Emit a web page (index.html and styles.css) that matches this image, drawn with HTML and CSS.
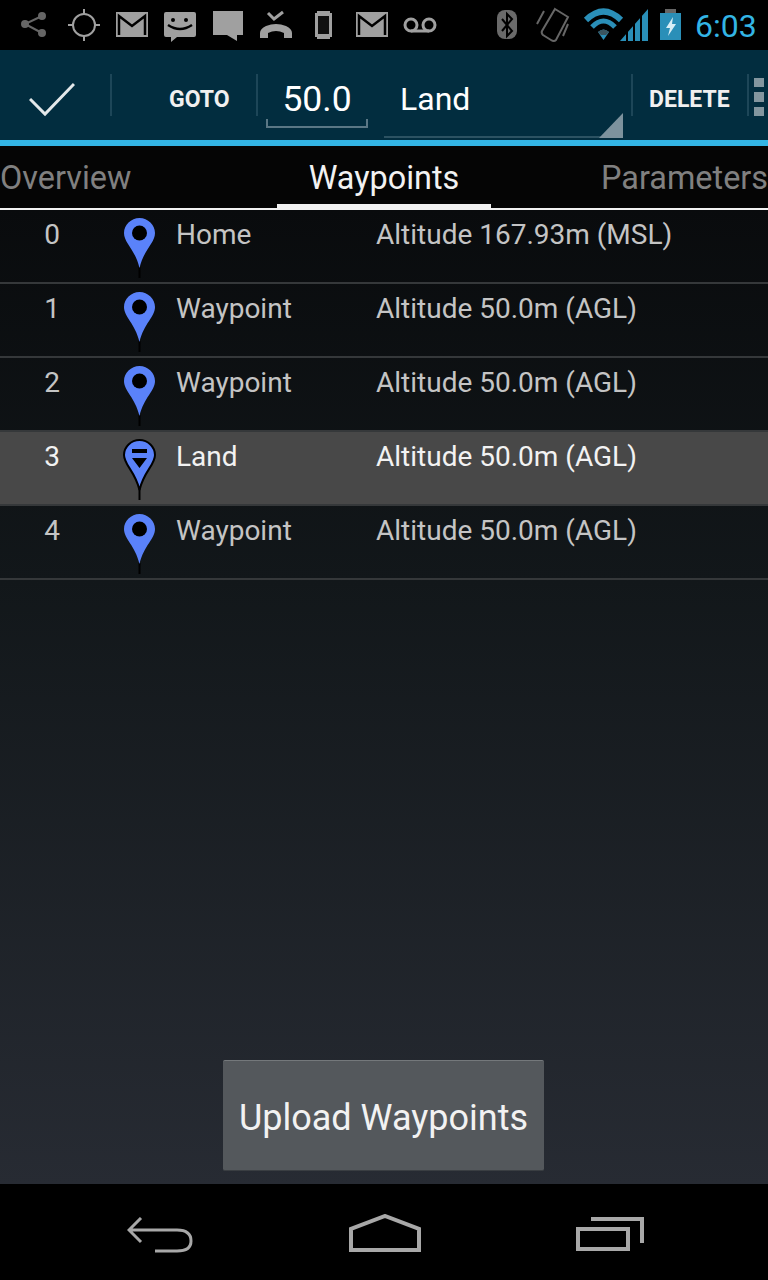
FILE: index.html
```html
<!DOCTYPE html>
<html>
	<head>
		<meta charset="utf-8" />
		<title>Waypoints</title>
		<link rel="stylesheet" href="styles.css">
	</head>

	<body>
		<div class="screen">
			<div class="status">
				<svg class="cell" viewBox="0 0 48 50"><g fill="#666" stroke="#666" stroke-width="2"><path d="M30 16 13 24 30 33" fill="none"/><circle cx="13" cy="24" r="3"/><circle cx="30" cy="16" r="3"/><circle cx="30" cy="33" r="3"/></g></svg>
				<svg class="cell" viewBox="0 0 48 50"><g fill="none" stroke="#a0a0a0" stroke-width="2"><circle cx="24" cy="25" r="11"/><path d="M24 9v5M24 36v5M8 25h5M35 25h5"/></g></svg>
				<svg class="cell" viewBox="0 0 48 50"><rect x="8" y="12" width="32" height="25" fill="#a0a0a0"/><path d="M11 35V16L24 26 37 16V35" fill="none" stroke="#000" stroke-width="2.500"/></svg>
				<svg class="cell" viewBox="0 0 48 50"><path d="M10 12H38Q40 12 40 14V35Q40 37 38 37H21L15 42V37H10Q8 37 8 35V14Q8 12 10 12Z" fill="#a0a0a0"/><circle cx="17" cy="20" r="2"/><circle cx="30" cy="20" r="2"/><path d="M12 25Q24 33 36 25" fill="none" stroke="#000" stroke-width="2.500"/></svg>
				<svg class="cell" viewBox="0 0 48 50"><path d="M9 11H39V35H33V41L23 35H9Z" fill="#a0a0a0"/></svg>
				<svg class="cell" viewBox="0 0 48 50"><path d="M16 13 22 19 31 12" fill="none" stroke="#a0a0a0" stroke-width="3"/><path d="M8 38V33Q8 29 14 26 24 22 34 26 40 29 40 33V38H32V33Q24 29 16 33V38Z" fill="#a0a0a0"/></svg>
				<svg class="cell" viewBox="0 0 48 50"><path d="M17 11H30V13H32V37H30V39H17V37H15V13H17Z" fill="#a0a0a0"/><rect x="18" y="16" width="11" height="18" fill="#111"/></svg>
				<svg class="cell" viewBox="0 0 48 50"><rect x="8" y="12" width="32" height="25" fill="#a0a0a0"/><path d="M11 35V16L24 26 37 16V35" fill="none" stroke="#000" stroke-width="2.500"/></svg>
				<svg class="cell" viewBox="0 0 48 50"><g fill="none" stroke="#a0a0a0" stroke-width="3"><circle cx="15" cy="25" r="6"/><circle cx="33" cy="25" r="6"/><path d="M15 31H33"/></g></svg>
				<div class="status-right">
					<svg class="cell" viewBox="0 0 48 50"><rect x="14" y="10" width="20" height="29" rx="8" fill="#6a6a6a"/><path d="M19 19 29 31 24 36V14L29 19 19 31" fill="none" stroke="#000" stroke-width="2"/></svg>
					<svg class="cell" viewBox="0 0 48 50"><g fill="none" stroke="#666" stroke-width="2"><path d="M24 9 37 17 25 40Q23 42 20 40L12 35Q10 33 11 31Z"/><path d="M13 11 6 24M37 24 32 36"/></g></svg>
					<svg class="wifi" viewBox="0 0 72 50"><g fill="none" stroke="#2a8fb8"><path d="M7 20Q24.500 3 42 20" stroke-width="6"/><path d="M13 27Q24.500 15 36 27" stroke-width="5"/></g><path d="M19 32Q24.500 27 30 32L24.500 40Z" fill="#2a8fb8"/><path d="M19 32Q24.500 27 30 32L27 35H22Z" fill="#3a5560"/><path d="M41 41H69V9Z" fill="#2a8fb8"/><path d="M48 41V30M55 41V22M62 41V15" stroke="#000" stroke-width="2"/></svg>
					<svg class="battery" viewBox="0 0 22 50"><rect x="5" y="9" width="11" height="4" fill="#666"/><rect y="13" width="21" height="27" fill="#2a8fb8"/><path d="M13 17 6 28H10L8 36 16 24H12Z" fill="#d8eef6"/></svg>
					<span class="clock">6:03</span>
				</div>
			</div>

			<div class="actionbar">
				<div class="done">
					<svg width="46" height="36" viewBox="0 0 46 36"><path d="M1 18 16 33 45 3" fill="none" stroke="#e4e8ea" stroke-width="3"/></svg>
				</div>
				<div class="action goto">GOTO</div>
				<div class="field">50.0</div>
				<div class="spinner">Land</div>
				<div class="action delete">DELETE</div>
				<div class="overflow"><i></i><i></i><i></i></div>
			</div>

			<div class="tabs">
				<div class="tab tab-left">Overview</div>
				<div class="tab tab-on">Waypoints</div>
				<div class="tab tab-right">Parameters</div>
			</div>

			<div class="content">
				<ul class="list">
					<li class="row">
						<span class="num">0</span>
						<svg class="pin" viewBox="0 0 36 64"><path d="M18.500 52V63" stroke="#000" stroke-width="2"/><path d="M18.500 3C10 3 3 10 3 18 3 28 14 34 18.500 53 23 34 34 28 34 18 34 10 27 3 18.500 3Z" fill="#5a82fa"/><circle cx="18.500" cy="18" r="7.500" fill="#000"/></svg>
						<span class="kind">Home</span>
						<span class="alt">Altitude 167.93m (MSL)</span>
					</li>
					<li class="row">
						<span class="num">1</span>
						<svg class="pin" viewBox="0 0 36 64"><path d="M18.500 52V63" stroke="#000" stroke-width="2"/><path d="M18.500 3C10 3 3 10 3 18 3 28 14 34 18.500 53 23 34 34 28 34 18 34 10 27 3 18.500 3Z" fill="#5a82fa"/><circle cx="18.500" cy="18" r="7.500" fill="#000"/></svg>
						<span class="kind">Waypoint</span>
						<span class="alt">Altitude 50.0m (AGL)</span>
					</li>
					<li class="row">
						<span class="num">2</span>
						<svg class="pin" viewBox="0 0 36 64"><path d="M18.500 52V63" stroke="#000" stroke-width="2"/><path d="M18.500 3C10 3 3 10 3 18 3 28 14 34 18.500 53 23 34 34 28 34 18 34 10 27 3 18.500 3Z" fill="#5a82fa"/><circle cx="18.500" cy="18" r="7.500" fill="#000"/></svg>
						<span class="kind">Waypoint</span>
						<span class="alt">Altitude 50.0m (AGL)</span>
					</li>
					<li class="row row-on">
						<span class="num">3</span>
						<svg class="pin" viewBox="0 0 36 64"><path d="M18.500 52V63" stroke="#000" stroke-width="2"/><path d="M18.500 3C10 3 3 10 3 18 3 28 14 34 18.500 53 23 34 34 28 34 18 34 10 27 3 18.500 3Z" fill="#5a82fa" stroke="#000" stroke-width="2"/><path d="M11 12H26V16H11ZM11 21H26L18.500 31Z" fill="#000"/></svg>
						<span class="kind">Land</span>
						<span class="alt">Altitude 50.0m (AGL)</span>
					</li>
					<li class="row">
						<span class="num">4</span>
						<svg class="pin" viewBox="0 0 36 64"><path d="M18.500 52V63" stroke="#000" stroke-width="2"/><path d="M18.500 3C10 3 3 10 3 18 3 28 14 34 18.500 53 23 34 34 28 34 18 34 10 27 3 18.500 3Z" fill="#5a82fa"/><circle cx="18.500" cy="18" r="7.500" fill="#000"/></svg>
						<span class="kind">Waypoint</span>
						<span class="alt">Altitude 50.0m (AGL)</span>
					</li>
				</ul>
				<div class="upload">Upload Waypoints</div>
			</div>

			<div class="navbar">
				<svg class="nav-low" width="66" height="36" viewBox="0 0 66 36"><path d="M14 1 2 13 14 25M3 13H50Q64 13 64 24 64 34 50 34H28" fill="none" stroke="#a8a8a8" stroke-width="3"/></svg>
				<svg width="72" height="38" viewBox="0 0 72 38"><path d="M2 36V15L36 2 70 15V36Z" fill="none" stroke="#a8a8a8" stroke-width="4"/></svg>
				<svg class="nav-low" width="68" height="36" viewBox="0 0 68 36"><path d="M15 2H66V26" fill="none" stroke="#a8a8a8" stroke-width="4"/><rect x="2" y="12" width="50" height="20" fill="none" stroke="#a8a8a8" stroke-width="4"/></svg>
			</div>
		</div>
	</body>

</html>
```

FILE: styles.css
```css
body,
ul {
	margin: 0;
	padding: 0;
}

li {
	list-style: none;
}

body {
	font-family: Roboto, "Liberation Sans", sans-serif;
	background: #000;
}

.screen {
	width: 768px;
	height: 1280px;
	display: flex;
	flex-direction: column;
	overflow: hidden;
}

.status {
	height: 50px;
	padding: 0 13px 0 12px;
	display: flex;
	flex: none;
	background: #000;
	box-sizing: border-box;
}

.cell {
	width: 48px;
	height: 50px;
	flex: none;
}

.status-right {
	margin-left: auto;
	display: flex;
}

.wifi {
	width: 72px;
	height: 50px;
}

.battery {
	width: 22px;
	height: 50px;
	margin-left: 9px;
}

.clock {
	width: 73px;
	padding-left: 13px;
	box-sizing: border-box;
	font-size: 32px;
	line-height: 52px;
	color: #33b5e5;
}

.actionbar {
	height: 96px;
	display: flex;
	flex: none;
	background: #022d3f;
	border-bottom: 6px solid #33b5e5;
	box-sizing: border-box;
	color: #fff;
}

.done {
	width: 110px;
	display: flex;
	align-items: center;
	justify-content: center;
	padding: 8px 6px 0 0;
	box-sizing: border-box;
}

.action {
	margin: 24px 0;
	line-height: 52px;
	font-size: 23px;
	font-weight: bold;
	border-left: 2px solid #1d4658;
	color: #f0f0f0;
	box-sizing: border-box;
}

.goto {
	width: 148px;
	padding-left: 57px;
	border-right: 2px solid #1d4658;
}

.delete {
	width: 116px;
	padding-left: 16px;
}

.field {
	width: 98px;
	height: 76px;
	margin: 0 0 12px 8px;
	line-height: 98px;
	font-size: 35.5px;
	text-align: center;
	border: solid #5a7785;
	border-width: 0 2px 2px;
	border-image: linear-gradient(to top, #5a7785 8px, transparent 8px) 1;
	flex: none;
}

.spinner {
	width: 239px;
	height: 88px;
	margin-left: 16px;
	margin-right: 8px;
	padding-left: 16px;
	box-sizing: border-box;
	line-height: 98px;
	font-size: 32px;
	border-bottom: 2px solid #2c5262;
	position: relative;
	flex: none;
}

.spinner:after {
	content: "";
	position: absolute;
	right: 0;
	bottom: -2px;
	border-style: solid;
	border-width: 0 0 25px 24px;
	border-color: transparent transparent #7d929d;
}

.overflow {
	margin: 24px 0;
	padding: 4px 0 0 5px;
	border-left: 2px solid #1d4658;
	display: flex;
	flex-direction: column;
	gap: 5px;
}

.overflow i {
	display: block;
	width: 10px;
	height: 10px;
	background: #83969f;
}

.tabs {
	height: 64px;
	display: flex;
	flex: none;
	background: #050505;
	border-bottom: 2px solid #f2f2f2;
	box-sizing: border-box;
	font-size: 32.4px;
	line-height: 64px;
	color: #808080;
}

.tab-left,
.tab-right {
	flex: 1;
}

.tab-right {
	text-align: right;
}

.tab-on {
	width: 214px;
	height: 62px;
	text-align: center;
	color: #f2f2f2;
	border-bottom: 4px solid #f2f2f2;
	box-sizing: border-box;
}

.content {
	flex: 1;
	display: flex;
	flex-direction: column;
	align-items: center;
	background: linear-gradient(#090b0d, #12171a 38%, #272b33);
}

.list {
	width: 100%;
}

.row {
	height: 74px;
	display: flex;
	border-bottom: 2px solid #35383a;
	box-sizing: border-box;
	font-size: 28px;
	line-height: 50px;
	color: #c4c4c4;
}

.row-on {
	background: #484848;
	color: #f2f2f2;
}

.num {
	width: 104px;
	text-align: center;
}

.pin {
	width: 36px;
	height: 64px;
	margin: 5px 0 0 17px;
	flex: none;
}

.kind {
	width: 200px;
	margin-left: 19px;
	flex: none;
}

.upload {
	margin-top: auto;
	margin-bottom: 13px;
	margin-right: 1px;
	width: 321px;
	height: 111px;
	background: #54585c;
	border-top: 1px solid #74787b;
	border-bottom: 1px solid #3a3e42;
	border-radius: 2px;
	box-sizing: border-box;
	text-align: center;
	font-size: 36px;
	line-height: 114px;
	color: #f2f2f2;
}

.navbar {
	height: 96px;
	flex: none;
	background: #000;
	display: flex;
	align-items: flex-start;
	justify-content: space-between;
	padding: 30px 124px 0 127px;
	box-sizing: border-box;
}

.nav-low {
	margin-top: 3px;
}
```
